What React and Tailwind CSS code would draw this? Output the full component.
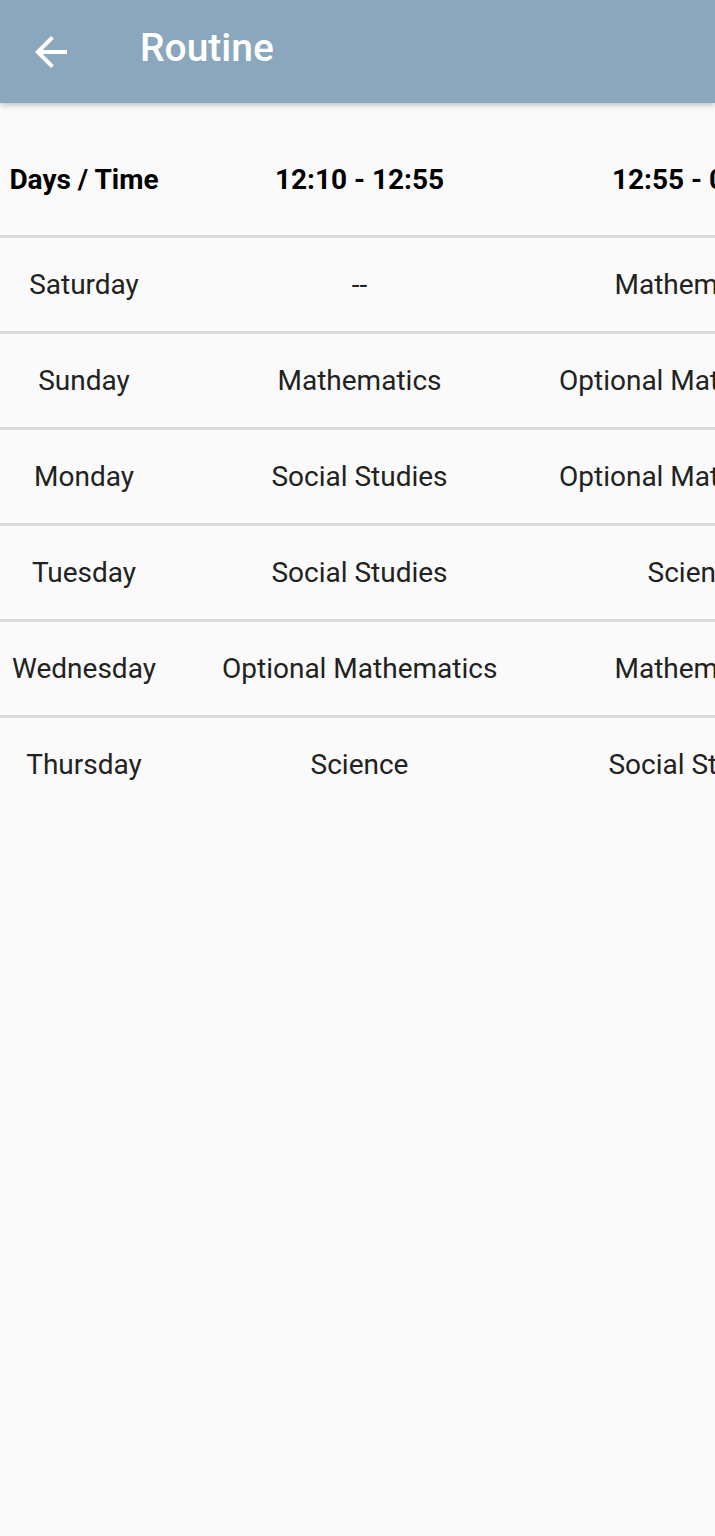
import React from "react";

const rows = [
  ["Saturday", "--", "Mathematics", "Science"],
  ["Sunday", "Mathematics", "Optional Mathematics", "Science"],
  ["Monday", "Social Studies", "Optional Mathematics", "Science"],
  ["Tuesday", "Social Studies", "Science", "Mathematics"],
  ["Wednesday", "Optional Mathematics", "Mathematics", "Science"],
  ["Thursday", "Science", "Social Studies", "Mathematics"],
];

function Row({ cells, header }) {
  return (
    <div className={`flex items-center shrink-0 pl-[8px] gap-[62px] ${header ? "h-[111px]" : "h-[93px]"}`}>
      <div className="w-[152px] shrink-0 text-center whitespace-nowrap">{cells[0]}</div>
      <div className="w-[275px] shrink-0 text-center whitespace-nowrap">{cells[1]}</div>
      <div className="w-[275px] shrink-0 text-center whitespace-nowrap">{cells[2]}</div>
      <div className="w-[275px] shrink-0 text-center whitespace-nowrap">{cells[3]}</div>
    </div>
  );
}

export default function App() {
  return (
    <div className="w-[715px] h-[1536px] bg-[#fafafa] overflow-hidden relative" style={{ fontFamily: "Roboto, sans-serif" }}>
      <div className="h-[103px] bg-[#8ba7bd] flex items-center shadow-[0_2px_6px_rgba(0,0,0,0.25)] relative z-10">
        <div className="w-[102px] h-[96px] flex items-center justify-center">
          <svg width="48" height="48" viewBox="0 0 24 24">
            <path d="M20 11H7.83l5.59-5.59L12 4l-8 8 8 8 1.41-1.41L7.83 13H20v-2z" fill="#ffffff" />
          </svg>
        </div>
        <div className="ml-[38px] -mt-[7px] text-white text-[39px] font-medium leading-none">Routine</div>
      </div>
      <div className="mt-[21px] overflow-hidden">
        <div className="w-max">
          <div className="text-[28px] font-bold text-black">
            <Row header cells={["Days / Time", "12:10 - 12:55", "12:55 - 01:40", "01:40 - 02:25"]} />
          </div>
          {rows.map((r, i) => (
            <div key={i}>
              <div className="h-[3px] bg-[#dadada]" />
              <div className="text-[28px] text-[#222222]">
                <Row cells={r} />
              </div>
            </div>
          ))}
        </div>
      </div>
    </div>
  );
}
